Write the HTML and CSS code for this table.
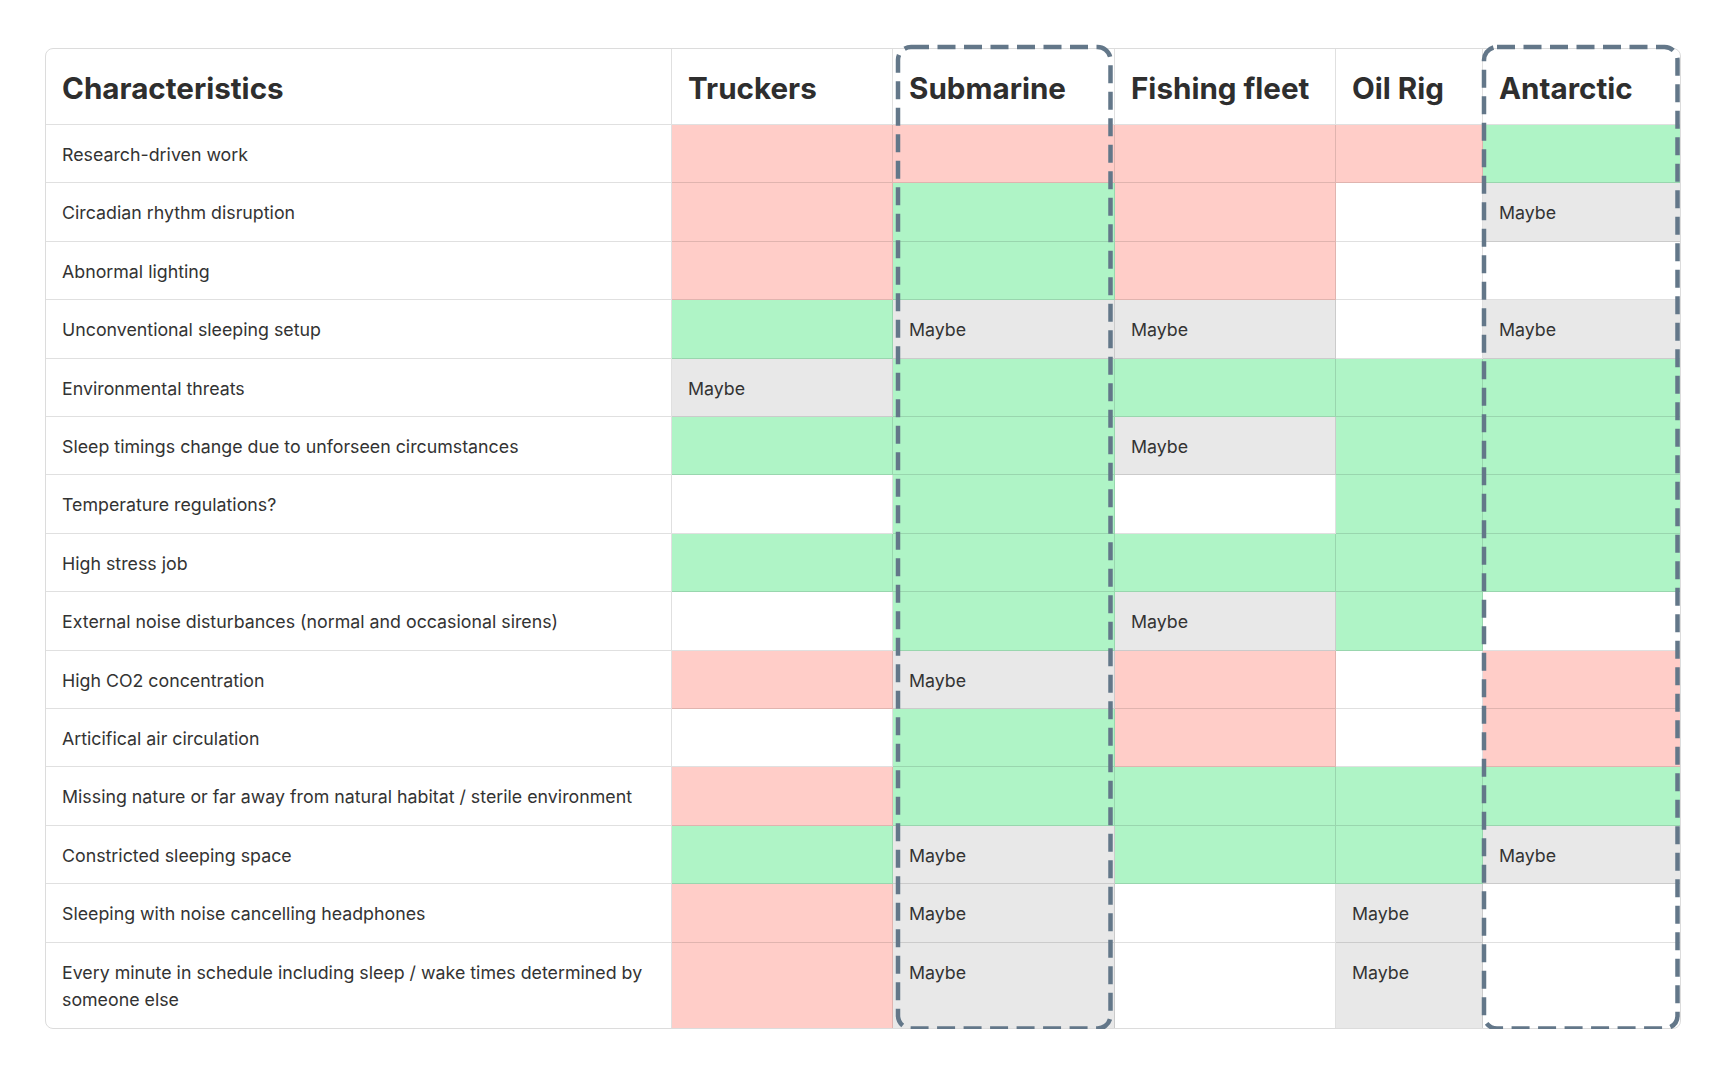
FILE: index.html
```html
<!DOCTYPE html>
<html lang="en">
<head>
<meta charset="utf-8">
<title>Characteristics comparison</title>
<link rel="stylesheet" href="styles.css">
</head>
<body>
<div class="page">
  <div class="stack">
    <div class="table">
      <div class="cell head">Characteristics</div>
      <div class="cell head">Truckers</div>
      <div class="cell head">Submarine</div>
      <div class="cell head">Fishing fleet</div>
      <div class="cell head">Oil Rig</div>
      <div class="cell head">Antarctic</div>

      <div class="cell label">Research-driven work</div>
      <div class="cell no"></div><div class="cell no"></div><div class="cell no"></div><div class="cell no"></div><div class="cell yes"></div>

      <div class="cell label">Circadian rhythm disruption</div>
      <div class="cell no"></div><div class="cell yes"></div><div class="cell no"></div><div class="cell"></div><div class="cell maybe">Maybe</div>

      <div class="cell label">Abnormal lighting</div>
      <div class="cell no"></div><div class="cell yes"></div><div class="cell no"></div><div class="cell"></div><div class="cell"></div>

      <div class="cell label">Unconventional sleeping setup</div>
      <div class="cell yes"></div><div class="cell maybe">Maybe</div><div class="cell maybe">Maybe</div><div class="cell"></div><div class="cell maybe">Maybe</div>

      <div class="cell label">Environmental threats</div>
      <div class="cell maybe">Maybe</div><div class="cell yes"></div><div class="cell yes"></div><div class="cell yes"></div><div class="cell yes"></div>

      <div class="cell label">Sleep timings change due to unforseen circumstances</div>
      <div class="cell yes"></div><div class="cell yes"></div><div class="cell maybe">Maybe</div><div class="cell yes"></div><div class="cell yes"></div>

      <div class="cell label">Temperature regulations?</div>
      <div class="cell"></div><div class="cell yes"></div><div class="cell"></div><div class="cell yes"></div><div class="cell yes"></div>

      <div class="cell label">High stress job</div>
      <div class="cell yes"></div><div class="cell yes"></div><div class="cell yes"></div><div class="cell yes"></div><div class="cell yes"></div>

      <div class="cell label">External noise disturbances (normal and occasional sirens)</div>
      <div class="cell"></div><div class="cell yes"></div><div class="cell maybe">Maybe</div><div class="cell yes"></div><div class="cell"></div>

      <div class="cell label">High CO2 concentration</div>
      <div class="cell no"></div><div class="cell maybe">Maybe</div><div class="cell no"></div><div class="cell"></div><div class="cell no"></div>

      <div class="cell label">Articifical air circulation</div>
      <div class="cell"></div><div class="cell yes"></div><div class="cell no"></div><div class="cell"></div><div class="cell no"></div>

      <div class="cell label">Missing nature or far away from natural habitat / sterile environment</div>
      <div class="cell no"></div><div class="cell yes"></div><div class="cell yes"></div><div class="cell yes"></div><div class="cell yes"></div>

      <div class="cell label">Constricted sleeping space</div>
      <div class="cell yes"></div><div class="cell maybe">Maybe</div><div class="cell yes"></div><div class="cell yes"></div><div class="cell maybe">Maybe</div>

      <div class="cell label">Sleeping with noise cancelling headphones</div>
      <div class="cell no"></div><div class="cell maybe">Maybe</div><div class="cell"></div><div class="cell maybe">Maybe</div><div class="cell"></div>

      <div class="cell label last">Every minute in schedule including sleep / wake times determined by someone else</div>
      <div class="cell no last"></div><div class="cell maybe last">Maybe</div><div class="cell last"></div><div class="cell maybe last">Maybe</div><div class="cell last"></div>
    </div>

    <div class="overlay" aria-hidden="true">
      <div class="outline col-sub">
        <div class="ring ring-sub">
          <svg class="ring-svg" width="100%" height="100%"><rect x="0" y="0" width="100%" height="100%" rx="13" ry="13"/></svg>
        </div>
      </div>
      <div class="outline col-ant">
        <div class="ring ring-ant">
          <svg class="ring-svg" width="100%" height="100%"><rect x="0" y="0" width="100%" height="100%" rx="13" ry="13"/></svg>
        </div>
      </div>
    </div>
  </div>
</div>
</body>
</html>
```

FILE: styles.css
```css
html, body {
  margin: 0;
  padding: 0;
  background: #ffffff;
}

body {
  font-family: Inter, "Noto Sans", "Liberation Sans", sans-serif;
  color: #333333;
}

.page {
  padding: 48px 0 0 45px;
}

.stack {
  display: grid;
  width: 1636px;
}

.table,
.overlay {
  grid-area: 1 / 1;
}

.table {
  display: grid;
  grid-template-columns: 626px 221px 222px 221px 147px 197px;
  grid-template-rows: 76px;
  border: 1px solid #dcdcdc;
  border-radius: 8px;
  background: #ffffff;
}

.overlay {
  display: grid;
  grid-template-columns: 626px 221px 222px 221px 147px 197px;
  padding: 1px;
  position: relative;
  z-index: 2;
  pointer-events: none;
}

.cell {
  border-right: 1px solid rgba(0, 0, 0, 0.12);
  border-bottom: 1px solid rgba(0, 0, 0, 0.12);
  padding: 16px 16px 14px;
  font-size: 17.8px;
  line-height: 27.4px;
  color: #333333;
}

.cell:nth-child(6n) {
  border-right: none;
}

.cell.last {
  border-bottom: none;
}

.head {
  display: flex;
  align-items: center;
  padding: 3px 16px 0;
  font-size: 29.6px;
  font-weight: 700;
  line-height: 36px;
  color: #2e2e2e;
}

.head:first-child {
  border-top-left-radius: 7px;
}

.head:nth-child(6) {
  border-top-right-radius: 7px;
}

.label.last {
  border-bottom-left-radius: 7px;
}

.no {
  background: #ffcdc8;
}

.yes {
  background: #aff4c6;
}

.maybe {
  background: #e8e8e8;
}

.outline {
  position: relative;
}

.col-sub {
  grid-column: 3;
}

.col-ant {
  grid-column: 6;
}

.ring {
  position: absolute;
  top: -2px;
  bottom: -1px;
}

.ring-sub {
  left: 4.5px;
  right: 5px;
}

.ring-ant {
  left: 0.5px;
  right: 3px;
}

.ring-svg {
  display: block;
  overflow: visible;
}

.ring-svg rect {
  fill: none;
  stroke: #637789;
  stroke-width: 4.5;
  stroke-dasharray: 18 8.5;
}
```
